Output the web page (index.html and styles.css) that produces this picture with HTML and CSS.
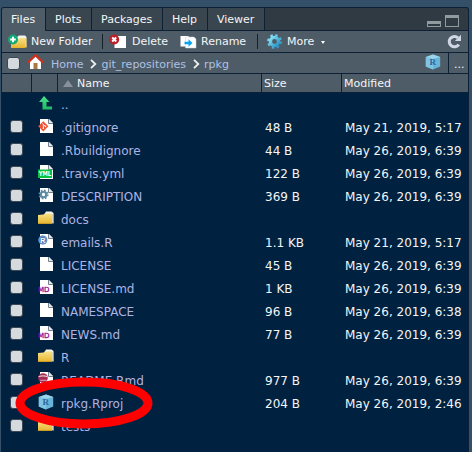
FILE: index.html
```html
<!DOCTYPE html>
<html lang="en">
<head>
<meta charset="utf-8">
<title>Files</title>
<link rel="stylesheet" href="styles.css">
</head>
<body>
<svg class="defs" aria-hidden="true">
  <defs>
    <linearGradient id="gold" x1="0" y1="0" x2="0" y2="1"><stop offset="0" stop-color="#f8e28a"/><stop offset="1" stop-color="#e6b42c"/></linearGradient>
    <linearGradient id="green" x1="0" y1="0" x2="0" y2="1"><stop offset="0" stop-color="#4be08c"/><stop offset="1" stop-color="#1eb866"/></linearGradient>
    <linearGradient id="cyan" x1="0" y1="0" x2="1" y2="1"><stop offset="0" stop-color="#8be4f6"/><stop offset="1" stop-color="#2392c4"/></linearGradient>
    <symbol id="page" viewBox="0 0 16 16"><path d="M2 1H11L15 5V15H2z" fill="#fff"/><path d="M10.5 1V5.5H15" fill="#e4e7e9" stroke="#667581" stroke-width=".9"/></symbol>
    <symbol id="up" viewBox="0 0 16 16"><path d="M6 1L11.5 7H8.5V11.5H14V14.5H4.5V7H1z" fill="url(#green)"/></symbol>
    <symbol id="git" viewBox="0 0 16 16"><use href="#page"/><path d="M5.3 3.2L10.4 8.3L5.3 13.4L.2 8.3z" fill="#f05133"/><path d="M4.2 5.5L7.3 8.3M5.4 6.7V10.5" stroke="#fff" stroke-width=".8" fill="none"/><circle cx="5.4" cy="10.2" r=".8" fill="#fff"/><circle cx="7.5" cy="8.4" r=".8" fill="#fff"/></symbol>
    <symbol id="yml" viewBox="0 0 16 16"><use href="#page"/><path d="M0 5.5H14V14H0z" fill="#08c143"/><text x=".8" y="12.4" class="yml-label" textLength="12.4" lengthAdjust="spacingAndGlyphs">YML</text></symbol>
    <symbol id="gear" viewBox="0 0 16 16"><circle cx="8" cy="8" r="6" fill="none" stroke="currentColor" stroke-width="2.6" stroke-dasharray="2.36 2.352"/><circle cx="8" cy="8" r="4" fill="none" stroke="currentColor" stroke-width="3.2"/></symbol>
    <symbol id="desc" viewBox="0 0 16 16"><use href="#page"/><use href="#gear" x="0" y="2" width="11" height="11"/></symbol>
    <symbol id="folder" viewBox="0 0 16 16"><path d="M6.5 4L8 1.5H13.5L15.5 3V13H6.5z" fill="#f4f3ec"/><path d="M15 4V14" stroke="#bdb38d"/><path d="M0 5L5.5 4.5L7 3.5H14V14H0z" fill="url(#gold)"/><path d="M0 13.5H14" stroke="#c99b25"/></symbol>
    <symbol id="rfile" viewBox="0 0 16 16"><use href="#page"/><circle cx="4.7" cy="7" r="4.6" fill="#4372b4"/><circle cx="4.7" cy="7" r="3.6" fill="none" stroke="#9ab8df" stroke-width=".6"/><text x="2.2" y="9.6" class="r-label">R</text></symbol>
    <symbol id="md" viewBox="0 0 16 16"><use href="#page"/><text x="0" y="12.5" class="md-label" textLength="11.5" lengthAdjust="spacingAndGlyphs">MD</text></symbol>
    <symbol id="rmd" viewBox="0 0 16 16"><use href="#page"/><circle cx="5" cy="7" r="4.8" fill="#a52a52"/><path d="M.5 5.8Q5 3.8 9.5 5.8" fill="none" stroke="#e8c5d0" stroke-width="1.2"/><path d="M2 9.3H8.5" stroke="#e8c5d0" stroke-width=".8"/></symbol>
    <symbol id="proj" viewBox="0 0 16 16"><path d="M8 .5L15.2 3V12.5L8 15.5L.8 12.5V3z" fill="#69b5d7"/><path d="M8 .5L15.2 3L8 5L.8 3z" fill="#9bd5eb"/><path d="M8 5V15.5L.8 12.5V3z" fill="#7fc4e0"/><text x="4.5" y="10.7" class="proj-label">R</text></symbol>
  </defs>
</svg>
<main class="pane">
  <nav class="tabs">
    <span class="tab tab-files active">Files</span><span class="tab tab-plots">Plots</span><span class="tab tab-packages">Packages</span><span class="tab tab-help">Help</span><span class="tab tab-viewer">Viewer</span>
    <span class="window-buttons"><i class="minimize"></i><i class="maximize"></i></span>
  </nav>
  <div class="toolbar">
    <span class="tool new">
      <svg width="20" height="16" viewBox="0 0 20 16"><path d="M9 3L11 1.5H17L18.5 3V13H9z" fill="#f4f3ec"/><path d="M3 5H11L12.5 4H17V14H3z" fill="url(#gold)"/><path d="M18 4V14" stroke="#d0b05d"/><circle cx="5" cy="5.5" r="5" fill="#12a878"/><path d="M5 2.7V8.3M2.2 5.5H7.8" stroke="#fff" stroke-width="2"/></svg><b>New Folder</b></span>
    <i class="separator"></i>
    <span class="tool delete">
      <svg width="18" height="16" viewBox="0 0 18 16"><path d="M5.5 2H17V14H5.5z" fill="#fff"/><circle cx="5.2" cy="5.5" r="5" fill="#bd2026"/><path d="M3.2 3.5L7.2 7.5M7.2 3.5L3.2 7.5" stroke="#fff" stroke-width="2"/></svg><b>Delete</b></span>
    <span class="tool rename">
      <svg width="17" height="16" viewBox="0 0 17 16"><path d="M.5 2H8L10 3.5V12.5H.5z" fill="#fff"/><path d="M5.5 3H14L16 5V14H5.5z" fill="#fff" stroke="#c7d0d6" stroke-width=".5"/><path d="M4.5 7.8H8.5V5.3L12.5 9L8.5 12.7V10.3H4.5z" fill="#08a5ee"/></svg><b>Rename</b></span>
    <i class="separator"></i>
    <span class="tool more">
      <svg width="15" height="15" viewBox="0 0 15 15"><circle cx="7.5" cy="7.5" r="6" fill="none" stroke="url(#cyan)" stroke-width="2.8" stroke-dasharray="2.36 2.352"/><circle cx="7.5" cy="7.5" r="4.1" fill="none" stroke="url(#cyan)" stroke-width="3.4"/></svg><b>More</b><i class="caret"></i></span>
    <svg class="refresh" width="15" height="15" viewBox="0 0 15 15"><path d="M11.8 10.5A5.2 5.2 0 1 1 11 3.8" fill="none" stroke="#d0d7e2" stroke-width="3"/><path d="M14 .8V7H7.8z" fill="#d0d7e2"/></svg>
  </div>
  <div class="path">
    <i class="check"></i>
    <svg class="home" width="17" height="16" viewBox="0 0 17 16"><path d="M3 8L8.5 2.5L14 8V15H3z" fill="#fff"/><path d="M6.5 9H10.5V15H6.5z" fill="#a87943"/><path d="M.8 8.5L8.5 1.2L16.2 8.5" fill="none" stroke="#d72d14" stroke-width="2"/></svg>
    <span class="crumb">Home</span><svg class="chevron" width="7" height="10" viewBox="0 0 7 10"><path d="M1 .8L5.3 5L1 9.2" fill="none" stroke="#eef1f4" stroke-width="1.8"/></svg>
    <span class="crumb">git_repositories</span><svg class="chevron" width="7" height="10" viewBox="0 0 7 10"><path d="M1 .8L5.3 5L1 9.2" fill="none" stroke="#eef1f4" stroke-width="1.8"/></svg>
    <span class="crumb">rpkg</span>
    <svg class="project" width="16" height="16"><use href="#proj"/></svg>
    <span class="browse">...</span>
  </div>
  <div class="grid head"><span></span><span></span><span class="name-head"><i class="sort"></i>Name</span><span>Size</span><span>Modified</span></div>
  <div class="files">
    <div class="grid row"><span></span><svg class="icon"><use href="#up"/></svg><a>..</a><span></span><span></span></div>
    <div class="grid row"><i class="check"></i><svg class="icon"><use href="#git"/></svg><a>.gitignore</a><span>48 B</span><span>May 21, 2019, 5:17</span></div>
    <div class="grid row"><i class="check"></i><svg class="icon"><use href="#page"/></svg><a>.Rbuildignore</a><span>44 B</span><span>May 26, 2019, 6:39</span></div>
    <div class="grid row"><i class="check"></i><svg class="icon"><use href="#yml"/></svg><a>.travis.yml</a><span>122 B</span><span>May 26, 2019, 6:39</span></div>
    <div class="grid row"><i class="check"></i><svg class="icon"><use href="#desc"/></svg><a>DESCRIPTION</a><span>369 B</span><span>May 26, 2019, 6:39</span></div>
    <div class="grid row"><i class="check"></i><svg class="icon"><use href="#folder"/></svg><a>docs</a><span></span><span></span></div>
    <div class="grid row"><i class="check"></i><svg class="icon"><use href="#rfile"/></svg><a>emails.R</a><span>1.1 KB</span><span>May 21, 2019, 5:17</span></div>
    <div class="grid row"><i class="check"></i><svg class="icon"><use href="#page"/></svg><a>LICENSE</a><span>45 B</span><span>May 26, 2019, 6:39</span></div>
    <div class="grid row"><i class="check"></i><svg class="icon"><use href="#md"/></svg><a>LICENSE.md</a><span>1 KB</span><span>May 26, 2019, 6:39</span></div>
    <div class="grid row"><i class="check"></i><svg class="icon"><use href="#page"/></svg><a>NAMESPACE</a><span>96 B</span><span>May 26, 2019, 6:38</span></div>
    <div class="grid row"><i class="check"></i><svg class="icon"><use href="#md"/></svg><a>NEWS.md</a><span>77 B</span><span>May 26, 2019, 6:39</span></div>
    <div class="grid row"><i class="check"></i><svg class="icon"><use href="#folder"/></svg><a>R</a><span></span><span></span></div>
    <div class="grid row"><i class="check"></i><svg class="icon"><use href="#rmd"/></svg><a>README.Rmd</a><span>977 B</span><span>May 26, 2019, 6:39</span></div>
    <div class="grid row"><i class="check"></i><svg class="icon"><use href="#proj"/></svg><a>rpkg.Rproj</a><span>204 B</span><span>May 26, 2019, 2:46</span></div>
    <div class="grid row"><i class="check"></i><svg class="icon"><use href="#folder"/></svg><a>tests</a><span></span><span></span></div>
  </div>
</main>
<svg class="highlight" width="138" height="52" viewBox="0 0 138 52"><ellipse cx="69" cy="26" rx="64" ry="21" fill="none" stroke="#f00" stroke-width="9"/></svg>
</body>
</html>
```
FILE: styles.css
```css
* { box-sizing: border-box; }
body {
  margin: 0;
  padding: 7px 3px 0 1px;
  width: 472px;
  height: 452px;
  overflow: hidden;
  background: #344f68;
  font: 11px/14px "DejaVu Sans", sans-serif;
  color: #f3f5f6;
}
.defs { position: absolute; width: 0; height: 0; }
svg { display: block; flex: none; }
.pane {
  width: 468px;
  height: 445px;
  border: 1px solid #0d2035;
  border-bottom: 0;
  border-radius: 3px 3px 0 0;
  background: #002240;
  overflow: hidden;
}
.tabs { display: flex; height: 23px; background: #303a43; border-bottom: 1px solid #0d2035; }
.tab { background: #3a464f; border-right: 1px solid #0d2035; padding: 5px 0 0 9px; }
.tab.active { background: #4e5c68; height: 23px; }
.tab-files { width: 44px; }
.tab-plots { width: 46px; }
.tab-packages { width: 71px; }
.tab-help { width: 45px; }
.tab-viewer { width: 57px; }
.window-buttons { display: flex; align-items: flex-end; gap: 4px; margin-left: auto; padding: 0 9px 3px 0; }
.minimize { width: 14px; height: 6px; border: 1px solid #909ba0; border-top-width: 3px; }
.maximize { width: 14px; height: 12px; border: 1px solid #909ba0; border-top-width: 3px; }
.toolbar { display: flex; height: 22px; align-items: center; background: #4e5c68; border-bottom: 1px solid #0d2035; padding-left: 6px; }
.tool { display: flex; align-items: center; white-space: nowrap; height: 21px; }
.tool b { font-weight: normal; padding-top: 1px; }
.new { width: 94px; gap: 3px; }
.separator { width: 1px; height: 15px; background: #172029; }
.delete { gap: 5px; padding-left: 6px; width: 77px; }
.rename { gap: 4px; width: 77px; }
.more { gap: 5px; padding-left: 9px; }
.caret { border: 2.5px solid transparent; border-top: 3px solid #fff; border-bottom: 0; margin: 1px 0 0 2px; }
.refresh { margin: 0 6px 1px auto; }
.path { display: flex; height: 21px; align-items: center; background: #4e5c68; border-bottom: 1px solid #0d2035; padding-left: 5px; }
.check { display: block; width: 13px; height: 13px; border: 1px solid #3b4752; border-radius: 3px; background: #d5dade; }
.home { margin: 0 7px 2px 7px; }
.crumb { color: #afc1e2; padding-top: 3px; }
.chevron { margin: 2px 4px 0 7px; }
.project { margin: 0 7px 2px auto; }
.browse { width: 20px; height: 20px; border-left: 1px solid #0d2035; padding: 5px 0 0 5px; }
.grid { display: grid; grid-template-columns: 30px 26px 204px 80px 1fr; }
.head { height: 19px; background: #4e5c68; border-bottom: 1px solid #0d2035; }
.head span { border-right: 1px solid #0d2035; padding: 3px 0 0 2px; }
.head span:last-child { border-right: 0; }
.head .name-head { display: flex; gap: 4px; padding-left: 5px; }
.sort { width: 10px; height: 7px; margin-top: 3px; background: #87919b; clip-path: polygon(50% 0, 100% 100%, 0 100%); }
.files { padding-top: 1px; font-size: 12px; }
.row { height: 23px; line-height: 23px; white-space: nowrap; }
.row > .check { margin: 3px 0 0 8px; }
.icon { width: 16px; height: 16px; margin: 1px 0 0 6px; color: #5c8ba3; }
.row a { padding-left: 3px; color: #afb2e2; }
.row span { padding-left: 3px; }
.highlight { position: absolute; left: 15px; top: 377px; }
.yml-label { font: bold 7px "DejaVu Sans", sans-serif; fill: #fff; }
.r-label { font: bold 7px "Liberation Sans", sans-serif; fill: #fff; }
.md-label { font: 7px "DejaVu Sans", sans-serif; fill: #920b92; stroke: #920b92; stroke-width: .3px; }
.proj-label { font: bold 9px "Liberation Serif", serif; fill: #2f66a5; }
```
